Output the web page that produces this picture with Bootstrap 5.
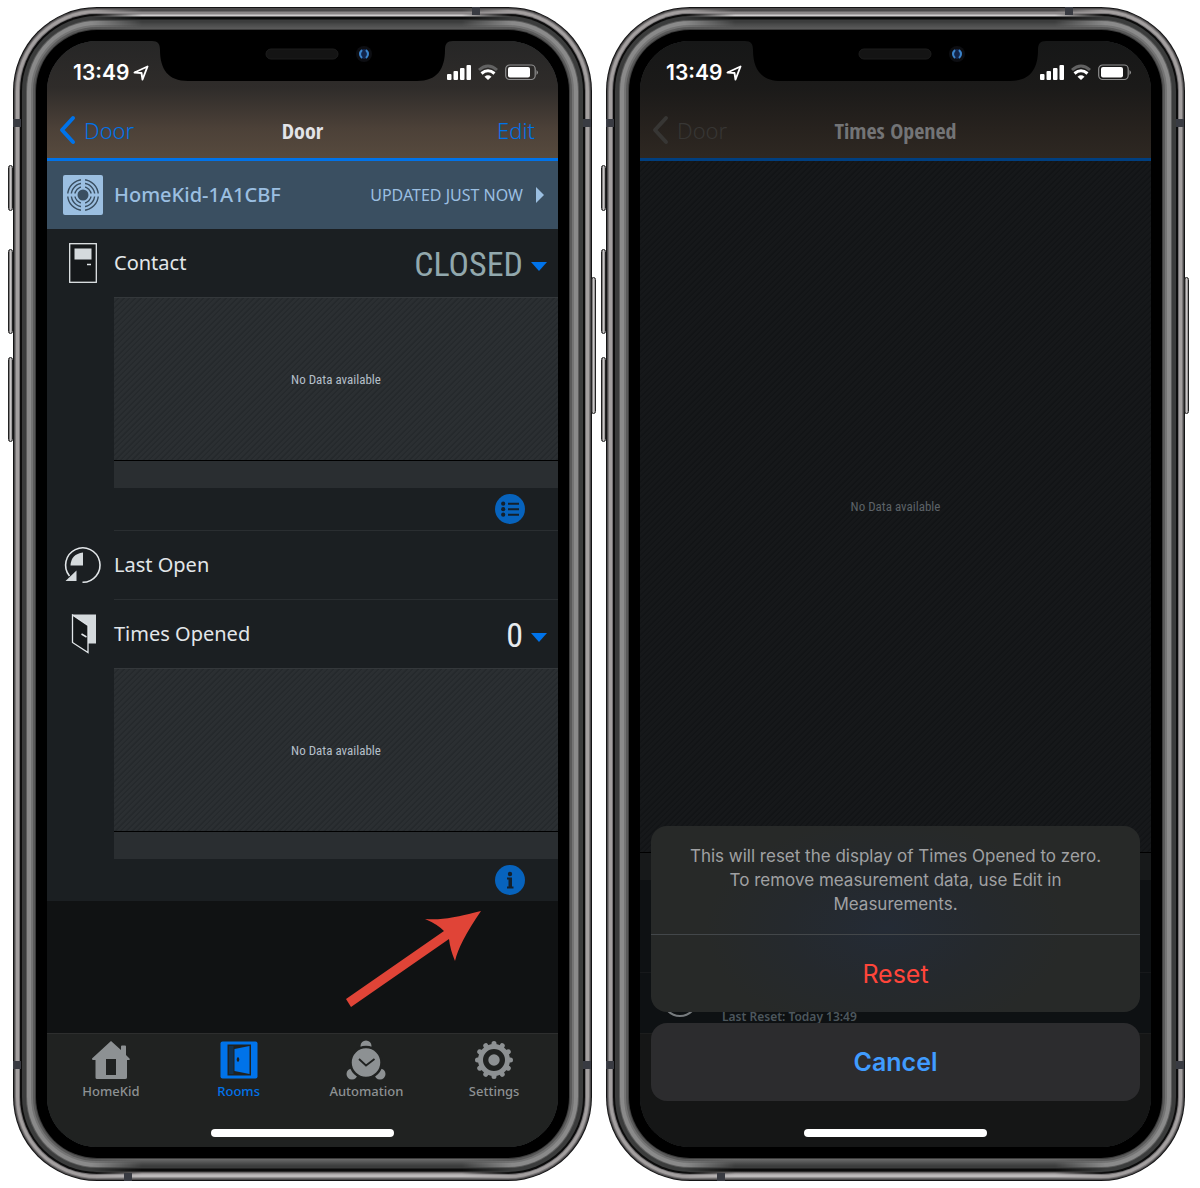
<!DOCTYPE html>
<html lang="en">
<head>
<meta charset="utf-8">
<meta name="viewport" content="width=device-width, initial-scale=1">
<title>Door – Times Opened</title>
<link rel="stylesheet" href="https://cdn.jsdelivr.net/npm/bootstrap@5.3.0/dist/css/bootstrap.min.css">
<style>
  body { font-family: "Noto Sans", sans-serif; background: #fff; }
  a { text-decoration: none; }
  .stage { padding: 6px 15px 5px 12px; gap: 13px; }

  /* Device: metal rings drawn around the display */
  .device { position: relative; padding: 35px 34px 35px 35px; min-width: 460px; flex: 1 1 0; }
  .display {
    position: relative; z-index: 1; border-radius: 50px; overflow: hidden; background: #1b1f22; color: #e2e6e9;
  }
  .bezel {
    border-radius: 50px;
    box-shadow: 0 0 0 11px #000, 0 0 0 12px #3c3c3c, 0 0 0 14px #5a5a5a, 0 0 0 16px #747474, 0 0 0 18px #8a8a8a,
      0 0 0 20px #8a8a8a, 0 0 0 21px #5c5c5c, 0 0 0 25px #3b3c3c, 0 0 0 27px #0c0c0c, 0 0 0 28px #747173,
      0 0 0 31px #a39f9f, 0 0 0 32px #7a7778, 0 0 0 33px #4c4a4b, 0 0 0 34px #141415;
  }
  .bezel::before, .bezel::after {
    content: ""; position: absolute; left: 80px; right: 80px; height: 20px;
    -webkit-mask: linear-gradient(90deg, transparent, #000 50px calc(100% - 50px), transparent);
    mask: linear-gradient(90deg, transparent, #000 50px calc(100% - 50px), transparent);
  }
  .bezel::before { top: 3px; background: linear-gradient(#4a4849 0 2px, #8b8788 3px 5px, #cfcccd 6px 7px, #0a0a0a 8px 10px, #3b3c3c 11px 13px, #474848 15px, #5b5b5b 20px); }
  .bezel::after { bottom: 3px; background: linear-gradient(0deg, #6b696a 0 1px, #bdbabb 2px 4px, #8b8788 6px, #0a0a0a 8px 10px, #3b3c3c 11px 13px, #474848 15px, #6b6b6b 20px); }
  .hw { position: absolute; width: 5px; border: 1px solid #222; border-radius: 3px; background: linear-gradient(90deg, #5c5a5b, #c9c6c6, #8a8788); }
  .hw-l { left: -4px; } .hw-r { right: -4px; }
  .hw-mute { top: 159px; height: 46px; } .hw-up { top: 243px; height: 85px; } .hw-down { top: 351px; height: 85px; } .hw-power { top: 271px; height: 137px; }
  .band { position: absolute; background: #393b42; width: 8px; height: 8px; }
  .band-l { left: 1px; } .band-r { right: 1px; } .band-hi { top: 113px; } .band-lo { bottom: 113px; }
  .band-top { top: 1px; right: 112px; } .band-bottom { bottom: 1px; left: 112px; }

  /* Status bar */
  .status { height: 63px; font-family: Inter, sans-serif; color: #fff; }
  .status > div { flex: 1 1 40px; min-width: 0; }
  .clock { font-size: 21px; font-weight: 600; line-height: 24px; padding: 20px 0 0 26px; gap: 4px; }
  .clock svg, .signals svg { flex: none; }
  .signals { padding: 23px 19px 0 0; }

  /* Title bar */
  .head { background: linear-gradient(#262626, #2f2c2a 40%, #4c4138 75%, #574a3e); border-bottom: 3px solid #0073ea; }
  .titlebar { height: 54px; padding: 0 12px 2px; font-size: 22px; line-height: 30px; }
  .titlebar a, .titlebar span { flex: 1 1 40px; color: #0073ea; font-weight: 300; gap: 8px; }
  .titlebar .edit { padding-right: 11px; }
  .titlebar h1 { font: 700 22px/30px "Open Sans Condensed", "Roboto Condensed", sans-serif; margin: 0; color: #e3e4e8; }

  .source { height: 68px; padding: 0 13px 0 16px; background: #3a4f61; color: #9bbfe1; gap: 11px; }
  .source .dev-name { font-size: 20px; font-weight: 500; }
  .source .stamp { font-size: 16px; gap: 12px; }
  .measure { height: 68px; padding: 0 11px 0 16px; gap: 11px; font-size: 20px; }
  .measure .glyph { width: 40px; flex: none; }
  .measure .reading { font-family: "Roboto Condensed", Roboto, sans-serif; font-weight: 400; font-size: 34px; line-height: 48px; gap: 8px; background: none; border: 0; padding: 2px 0 0; color: #e6eaee; }
  .measure .reading.state { color: #92a8ad; }
  .inset { margin-left: 67px; }
  .ruled { border-bottom: 1px solid #2a2e31; }
  .plot { height: 164px; border-top: 1px solid #34383b; border-bottom: 1px solid #000; font: 400 13px/20px "Roboto Condensed", Roboto, sans-serif; color: #b4bfc9; padding-top: 2px;
    background: repeating-linear-gradient(135deg, #2b2f32 0 2px, #25292c 3px 4px); }
  .axis { height: 27px; background: #2a2e31; }
  .act { height: 42px; padding-right: 33px; }
  .round { width: 30px; height: 30px; padding: 0; border: 0; background: none; display: block; }
  .rest { height: 132px; background: #101213; padding: 10px 76px 0 0; }
  .tabs { height: 114px; background: #202221; border-top: 1px solid #2d2e2e; }
  .tabs a { flex: 1 1 0; color: #8d9193; font-size: 13px; line-height: 18px; font-weight: 500; padding-top: 6px; gap: 2px; }
  .tabs a.on { color: #0073ea; }
  .homebar { position: absolute; left: 50%; bottom: 10px; width: 183px; height: 8px; margin-left: -92px; border-radius: 4px; background: #fff; z-index: 3; }

  /* Dimmed screen behind the action sheet */
  .dimmed { background: #0e1113; }
  .dimmed .head { background: linear-gradient(#161717, #1b1a19 40%, #27221e 75%, #2e2822); border-color: #003f80; }
  .dimmed .titlebar a { color: #373634; }
  .dimmed .titlebar h1 { color: #737476; }
  .bigplot { height: 692px; border-bottom: 1px solid #000; font: 400 13px/20px "Roboto Condensed", Roboto, sans-serif; color: #5c6267;
    background: repeating-linear-gradient(135deg, #16181a 0 2px, #121416 3px 4px); }
  .dimmed .axis { background: #17191a; }
  .dimmed .act { height: 93px; border-bottom: 1px solid #17191b; }
  .dimmed .lastreset { height: 60px; padding: 0 0 8px 22px; gap: 24px; font-size: 12px; line-height: 16px; font-weight: 600; color: #4d575d; }
  .dimmed .foot { height: 114px; background: #151616; border-top: 1px solid #1c1d1d; }
  .sheet { position: absolute; left: 11px; right: 11px; bottom: 46px; z-index: 2; gap: 11px; font-family: Inter, sans-serif; }
  .panel { border-radius: 16px; overflow: hidden; background: radial-gradient(ellipse 180px 110px at 48% 55%, #242b35, #25292d 55%, #272928); }
  .panel p { margin: 0; padding: 18px 30px; font-size: 17px; line-height: 24px; color: #a0a1a3; text-align: center; border-bottom: 1px solid #43474a; }
  .panel button, .sheet .cancel { border: 0; width: 100%; font-size: 25px; line-height: 30px; background: none; height: 77px; padding: 0; }
  .panel button { color: #ff453a; }
  .sheet .cancel { border-radius: 16px; background: #2c2c2e; color: #409cff; font-weight: 600; height: 78px; }
</style>
<script src="https://cdn.jsdelivr.net/npm/bootstrap@5.3.0/dist/js/bootstrap.bundle.min.js"></script>
</head>
<body>
<svg class="d-none" aria-hidden="true">
  <symbol id="notch" viewBox="0 0 301 41">
    <path d="M0 0C6 0 8 3 8 9C8 28 16 40 36 40H265C285 40 293 28 293 9C293 3 295 0 301 0Z" fill="#000"/>
    <rect x="114" y="8" width="72" height="10" rx="5" fill="#141414" stroke="#1d1d1d"/>
    <circle cx="212" cy="13" r="8" fill="#0d0e12"/><circle cx="212" cy="13" r="5" fill="#13254a"/>
    <path d="M210 9q-4 4 0 8M214 9q4 4 0 8" stroke="#3b83c9" stroke-width="2" fill="none"/>
  </symbol>
  <symbol id="loc" viewBox="0 0 16 16"><path d="M1.500 7.500L14.500 1.500L9.500 14.500L8.500 8Z" fill="none" stroke="#fff" stroke-width="1.900" stroke-linejoin="round"/></symbol>
  <symbol id="signals" viewBox="0 0 92 18">
    <g fill="#fff"><rect x="0" y="10" width="4.500" height="6" rx="1"/><rect x="6.500" y="7" width="4.500" height="9" rx="1"/><rect x="13" y="4" width="4.500" height="12" rx="1"/><rect x="19.500" y="1" width="4.500" height="15" rx="1"/></g>
    <path d="M32 6Q41 -2 50 6" fill="none" stroke="#626262" stroke-width="3"/>
    <path d="M34.500 9.500Q41 4 47.500 9.500" fill="none" stroke="#fff" stroke-width="3"/>
    <path d="M37.500 12.700Q41 10 44.500 12.700L41 16Z" fill="#fff"/>
    <rect x="58.700" y="1" width="29.500" height="14.500" rx="4" fill="none" stroke="#8f8f8f" stroke-width="1.200"/>
    <rect x="61" y="3" width="22" height="10.500" rx="2" fill="#fff"/><path d="M89.500 6v5q3-2.500 0-5Z" fill="#8f8f8f"/>
  </symbol>
  <symbol id="chev" viewBox="0 0 17 30"><path d="M14 3L3 15L14 27" fill="none" stroke="currentColor" stroke-width="4" stroke-linecap="round" stroke-linejoin="round"/></symbol>
  <symbol id="tri" viewBox="0 0 16 9"><path d="M0 0H16L8 9Z" fill="#0073ea"/></symbol>
  <symbol id="logo" viewBox="0 0 40 40">
    <rect width="40" height="40" rx="2" fill="#9bbfe1"/>
    <g fill="none" stroke="#3a4f61" stroke-width="1.400"><circle cx="20" cy="20" r="15.300"/><circle cx="20" cy="20" r="11.700"/><circle cx="20" cy="20" r="8.200"/></g>
    <path d="M20 2V38" stroke="#9bbfe1" stroke-width="4"/><path d="M2 20H38" stroke="#9bbfe1" stroke-width="3"/>
    <circle cx="20" cy="20" r="5.500" fill="#3a4f61"/>
  </symbol>
</svg>

<main class="stage d-flex flex-wrap">

  <section class="device">
    <div class="hw hw-l hw-mute"></div><div class="hw hw-l hw-up"></div><div class="hw hw-l hw-down"></div><div class="hw hw-r hw-power"></div>
    <div class="bezel">
      <div class="display d-flex flex-column">
        <header class="head">
          <div class="status d-flex">
            <div class="clock d-flex"><span>13:49</span><svg width="16" height="16" class="mt-1"><use href="#loc"/></svg></div>
            <svg class="flex-shrink-0" width="301" height="41"><use href="#notch"/></svg>
            <div class="signals d-flex justify-content-end"><svg width="92" height="18"><use href="#signals"/></svg></div>
          </div>
          <nav class="titlebar d-flex align-items-center">
            <a href="#" class="d-flex align-items-center"><svg width="17" height="30"><use href="#chev"/></svg>Door</a>
            <h1>Door</h1>
            <a href="#" class="edit text-end">Edit</a>
          </nav>
        </header>

        <a href="#" class="source d-flex align-items-center">
          <svg width="40" height="40"><use href="#logo"/></svg>
          <span class="dev-name me-auto">HomeKid-1A1CBF</span>
          <span class="stamp d-flex align-items-center">UPDATED JUST NOW
            <svg width="10" height="16" viewBox="0 0 10 16"><path d="M1 0L9 8L1 16Z" fill="#9bbfe1"/></svg></span>
        </a>

        <div class="measure d-flex align-items-center">
          <svg class="glyph" height="40" viewBox="0 0 40 40"><rect x="6.700" y=".7" width="26.600" height="38.600" fill="#15181a" stroke="#e2e6e9" stroke-width="1.300"/><rect x="11.500" y="5.500" width="17" height="11" fill="#d5dadd"/><path d="M24 21.500h4" stroke="#e2e6e9" stroke-width="1.500"/></svg>
          <span class="me-auto">Contact</span>
          <button type="button" class="reading state d-flex align-items-center"><span>CLOSED</span><svg class="mt-1" width="16" height="9"><use href="#tri"/></svg></button>
        </div>
        <div class="inset ruled">
          <div class="plot d-flex align-items-center justify-content-center">No Data available</div>
          <div class="axis"></div>
          <div class="act d-flex align-items-center justify-content-end">
            <button type="button" class="round" aria-label="List"><svg width="30" height="30" viewBox="0 0 30 30"><circle cx="15" cy="15" r="15" fill="#0763bd"/><g fill="#14202b"><circle cx="8.200" cy="9.700" r="2.100"/><circle cx="8.200" cy="15.200" r="2.100"/><circle cx="8.200" cy="20.700" r="2.100"/><path d="M13 8.700h11v2H13zM13 14.200h11v2H13zM13 19.700h11v2H13z"/></g></svg></button>
          </div>
        </div>

        <div class="measure d-flex align-items-center">
          <svg class="glyph" height="40" viewBox="0 0 40 40"><path d="M19.500 37.300A17.200 17.200 0 1 0 6.500 31" fill="none" stroke="#e2e6e9" stroke-width="1.600"/><path d="M20 7.500V20.500H7.500Q8 9 20 7.500ZM13.500 25.500V36H2.500Z" fill="#d5dadd"/></svg>
          <span>Last Open</span>
        </div>
        <div class="inset ruled"></div>
        <div class="measure d-flex align-items-center">
          <svg class="glyph" height="40" viewBox="0 0 40 40"><path d="M9 .5H33V29.500H25V11.500L10 2Z" fill="#d5dadd"/><path d="M9.500 1L25 11.500V38.500L9.500 28.500Z" fill="#15181a" stroke="#e2e6e9" stroke-width="1.300"/><path d="M18.500 20l5 3" stroke="#e2e6e9" stroke-width="1.500"/></svg>
          <span class="me-auto">Times Opened</span>
          <button type="button" class="reading d-flex align-items-center"><span>0</span><svg class="mt-1" width="16" height="9"><use href="#tri"/></svg></button>
        </div>
        <div class="inset">
          <div class="plot d-flex align-items-center justify-content-center">No Data available</div>
          <div class="axis"></div>
          <div class="act d-flex align-items-center justify-content-end">
            <button type="button" class="round" aria-label="Info"><svg width="30" height="30" viewBox="0 0 30 30"><circle cx="15" cy="15" r="15" fill="#0763bd"/><g fill="#14202b"><circle cx="15" cy="9" r="2.200"/><path d="M12 12.500h5v9h1.500v2H12v-2h1.500v-7H12z"/></g></svg></button>
          </div>
        </div>

        <div class="rest d-flex justify-content-end align-items-start">
          <svg width="136" height="97" viewBox="0 0 136 97"><path d="M135 0C107 7 97 9 79 8Q91 13 98 20L0 88L5 96L103 28Q104 38 109 50Q113 32 135 0Z" fill="#e04437"/></svg>
        </div>

        <nav class="tabs d-flex">
          <a href="#" class="d-flex flex-column align-items-center"><svg width="40" height="40" viewBox="0 0 40 40"><path fill="#8d9193" fill-rule="evenodd" d="M20 1L1 18.500Q1 20 2 20H4.500V37.500Q4.500 39 6 39H34Q36 39 36 37.500V20H38.500Q39 19 38.500 18.500L35 15V6.500Q35 5.500 34 5.500H31Q30 5.500 30 6.500V10ZM15 19H25V35H15Z"/></svg>HomeKid</a>
          <a href="#" class="on d-flex flex-column align-items-center"><svg width="40" height="40" viewBox="0 0 40 40"><rect x="1.500" y="1.500" width="37" height="37" rx="2" fill="#0073ea"/><path d="M8.500 4.500H32V35.500H8.500Z" fill="#202221"/><path d="M10 6H14.500V34H10Z" fill="#12324f"/><path d="M15.500 9L30.500 6V34L15.500 31Z" fill="#0073ea"/><ellipse cx="19" cy="19.500" rx="1.300" ry="2.200" fill="#202221"/></svg>Rooms</a>
          <a href="#" class="d-flex flex-column align-items-center"><svg width="40" height="40" viewBox="0 0 40 40"><g fill="#8d9193"><circle cx="20" cy="6" r="5.500"/><circle cx="6" cy="34" r="5.500"/><circle cx="34" cy="34" r="5.500"/></g><circle cx="20" cy="22.500" r="15.500" fill="#8d9193" stroke="#202221" stroke-width="2.500"/><path d="M13 19L20 25.500L28.500 19" fill="none" stroke="#202221" stroke-width="1.800"/></svg>Automation</a>
          <a href="#" class="d-flex flex-column align-items-center"><svg width="40" height="40" viewBox="0 0 40 40"><circle cx="20" cy="20" r="13.500" fill="none" stroke="#8d9193" stroke-width="5"/><g stroke="#8d9193" stroke-width="5" stroke-linecap="round"><path d="M20 3.500V6M20 34V36.500M3.500 20H6M34 20H36.500"/><path d="M20 3.500V6M20 34V36.500M3.500 20H6M34 20H36.500" transform="rotate(30 20 20)"/><path d="M20 3.500V6M20 34V36.500M3.500 20H6M34 20H36.500" transform="rotate(60 20 20)"/></g><circle cx="20" cy="20" r="5.700" fill="#8d9193"/></svg>Settings</a>
        </nav>
        <div class="homebar"></div>
      </div>
    </div>
    <div class="band band-l band-hi"></div><div class="band band-r band-hi"></div>
    <div class="band band-l band-lo"></div><div class="band band-r band-lo"></div>
    <div class="band band-top"></div><div class="band band-bottom"></div>
  </section>

  <section class="device">
    <div class="hw hw-l hw-mute"></div><div class="hw hw-l hw-up"></div><div class="hw hw-l hw-down"></div><div class="hw hw-r hw-power"></div>
    <div class="bezel">
      <div class="display dimmed d-flex flex-column">
        <header class="head">
          <div class="status d-flex">
            <div class="clock d-flex"><span>13:49</span><svg width="16" height="16" class="mt-1"><use href="#loc"/></svg></div>
            <svg class="flex-shrink-0" width="301" height="41"><use href="#notch"/></svg>
            <div class="signals d-flex justify-content-end"><svg width="92" height="18"><use href="#signals"/></svg></div>
          </div>
          <nav class="titlebar d-flex align-items-center">
            <a href="#" class="d-flex align-items-center"><svg width="17" height="30"><use href="#chev"/></svg>Door</a>
            <h1>Times Opened</h1>
            <span></span>
          </nav>
        </header>
        <div class="bigplot d-flex align-items-center justify-content-center">No Data available</div>
        <div class="axis"></div>
        <div class="act"></div>
        <div class="lastreset d-flex align-items-end"><svg width="36" height="36" viewBox="0 0 36 36" class="flex-shrink-0 mb-2"><circle cx="18" cy="18" r="17" fill="none" stroke="#777b7e" stroke-width="2"/></svg><span>Last Reset: Today 13:49</span></div>
        <div class="foot"></div>

        <div class="sheet d-flex flex-column" role="dialog" aria-label="Reset Times Opened">
          <div class="panel">
            <p>This will reset the display of Times Opened to zero.<br>To remove measurement data, use Edit in<br>Measurements.</p>
            <button type="button">Reset</button>
          </div>
          <button type="button" class="cancel">Cancel</button>
        </div>
        <div class="homebar"></div>
      </div>
    </div>
    <div class="band band-l band-hi"></div><div class="band band-r band-hi"></div>
    <div class="band band-l band-lo"></div><div class="band band-r band-lo"></div>
    <div class="band band-top"></div><div class="band band-bottom"></div>
  </section>

</main>
</body>
</html>
